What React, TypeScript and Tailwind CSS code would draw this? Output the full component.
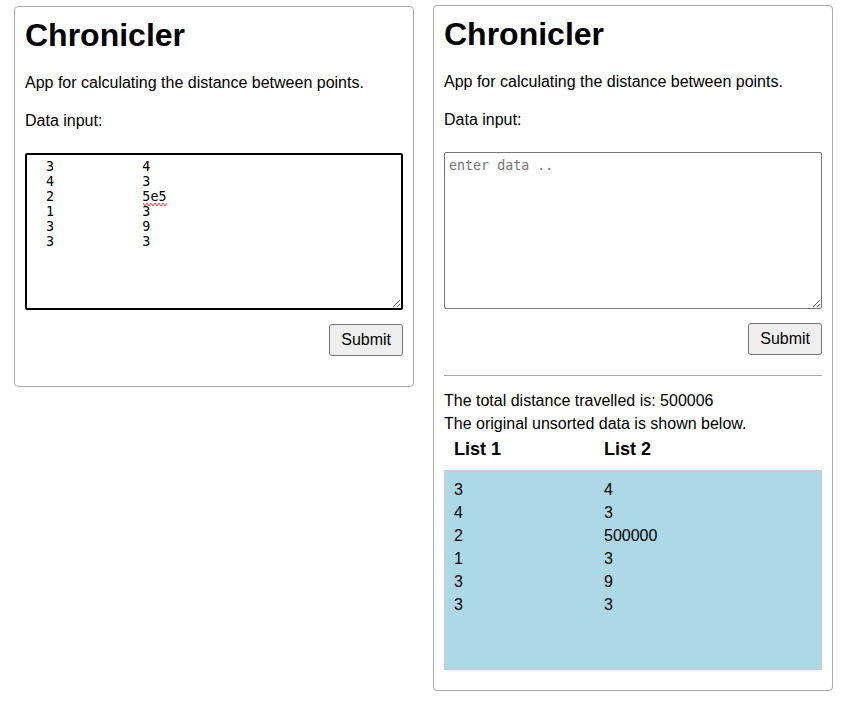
import { useState } from "react";

const sample = [
  ["3", "4"],
  ["4", "3"],
  ["2", "5e5"],
  ["1", "3"],
  ["3", "9"],
  ["3", "3"],
];

const inputText = sample
  .map(([a, b]) => "  " + a + " ".repeat(11) + b)
  .join("\n");

function parseRows(text: string): number[][] {
  return text
    .split("\n")
    .map((l) => l.trim())
    .filter(Boolean)
    .map((l) => l.split(/\s+/).map(Number));
}

function totalDistance(rows: number[][]): number {
  const a = rows.map((r) => r[0]).sort((x, y) => x - y);
  const b = rows.map((r) => r[1]).sort((x, y) => x - y);
  return a.reduce((sum, v, i) => sum + Math.abs(v - b[i]), 0);
}

function Header() {
  return (
    <>
      <h1 className="text-[32px] leading-[37px] font-bold">Chronicler</h1>
      <p className="mt-[20px] leading-[18px]">App for calculating the distance between points.</p>
      <p className="mt-[20px] leading-[18px]">Data input:</p>
    </>
  );
}

function SubmitButton() {
  return (
    <div className="mt-[14px] flex justify-end">
      <button className="h-[32px] rounded-[3px] border border-[#767676] bg-[#efefef] px-[11px] leading-[18px] text-black">
        Submit
      </button>
    </div>
  );
}

// the red spell-check squiggle that sits under "5e5"
function Squiggle() {
  return (
    <svg
      className="pointer-events-none absolute top-[49px] left-[118px]"
      width="24"
      height="5"
      viewBox="0 0 24 5"
    >
      <polyline
        points="0,1 2,4 4,1 6,4 8,1 10,4 12,1 14,4 16,1 18,4 20,1 22,4 24,1"
        fill="none"
        stroke="#ff3b3b"
        strokeWidth="1"
      />
    </svg>
  );
}

export default function App() {
  const [draft, setDraft] = useState(inputText);
  const rows = parseRows(inputText);
  const total = totalDistance(rows);

  return (
    <div className="flex items-start gap-[19px] pt-[5px] pl-[14px] font-['Liberation_Sans',Arial,sans-serif] text-[16px] text-black">
      {/* input card, textarea focused */}
      <div className="mt-[1px] w-[400px] rounded-[4px] border border-[#aaaaaa] px-[10px] pt-[10px] pb-[30px]">
        <Header />
        <div className="relative mt-[23px]">
          <textarea
            value={draft}
            onChange={(e) => setDraft(e.target.value)}
            spellCheck={false}
            className="block h-[157px] w-full resize-y rounded-[2px] border-2 border-black px-[3px] pt-[4px] pb-[2px] font-['DejaVu_Sans_Mono',monospace] text-[13.33px] leading-[15px] outline-none"
          />
          <Squiggle />
        </div>
        <SubmitButton />
      </div>

      {/* result card */}
      <div className="w-[400px] rounded-[4px] border border-[#aaaaaa] px-[10px] pt-[10px] pb-[20px]">
        <Header />
        <textarea
          placeholder="enter data .."
          className="mt-[23px] block h-[157px] w-full resize-y rounded-[2px] border border-[#767676] px-[4px] pt-[5px] pb-[3px] font-['DejaVu_Sans_Mono',monospace] text-[13.33px] leading-[15px] placeholder:text-[#757575] outline-none"
        />
        <SubmitButton />
        <div className="mt-[20px] h-px bg-[#a9a9a9]" />
        <div className="mt-[13px] leading-[23px]">
          <p>The total distance travelled is: {total}</p>
          <p>The original unsorted data is shown below.</p>
        </div>
        <div className="mt-[4px] flex pl-[10px] text-[18px] leading-[21px] font-bold">
          <span className="w-[150px]">List 1</span>
          <span>List 2</span>
        </div>
        <div className="mt-[10px] h-[200px] border border-[#cccccc] bg-[#add8e6] px-[9px] pt-[7px]">
          {rows.map(([a, b], i) => (
            <div key={i} className="flex leading-[23px]">
              <span className="w-[150px]">{a}</span>
              <span>{b}</span>
            </div>
          ))}
        </div>
      </div>
    </div>
  );
}
